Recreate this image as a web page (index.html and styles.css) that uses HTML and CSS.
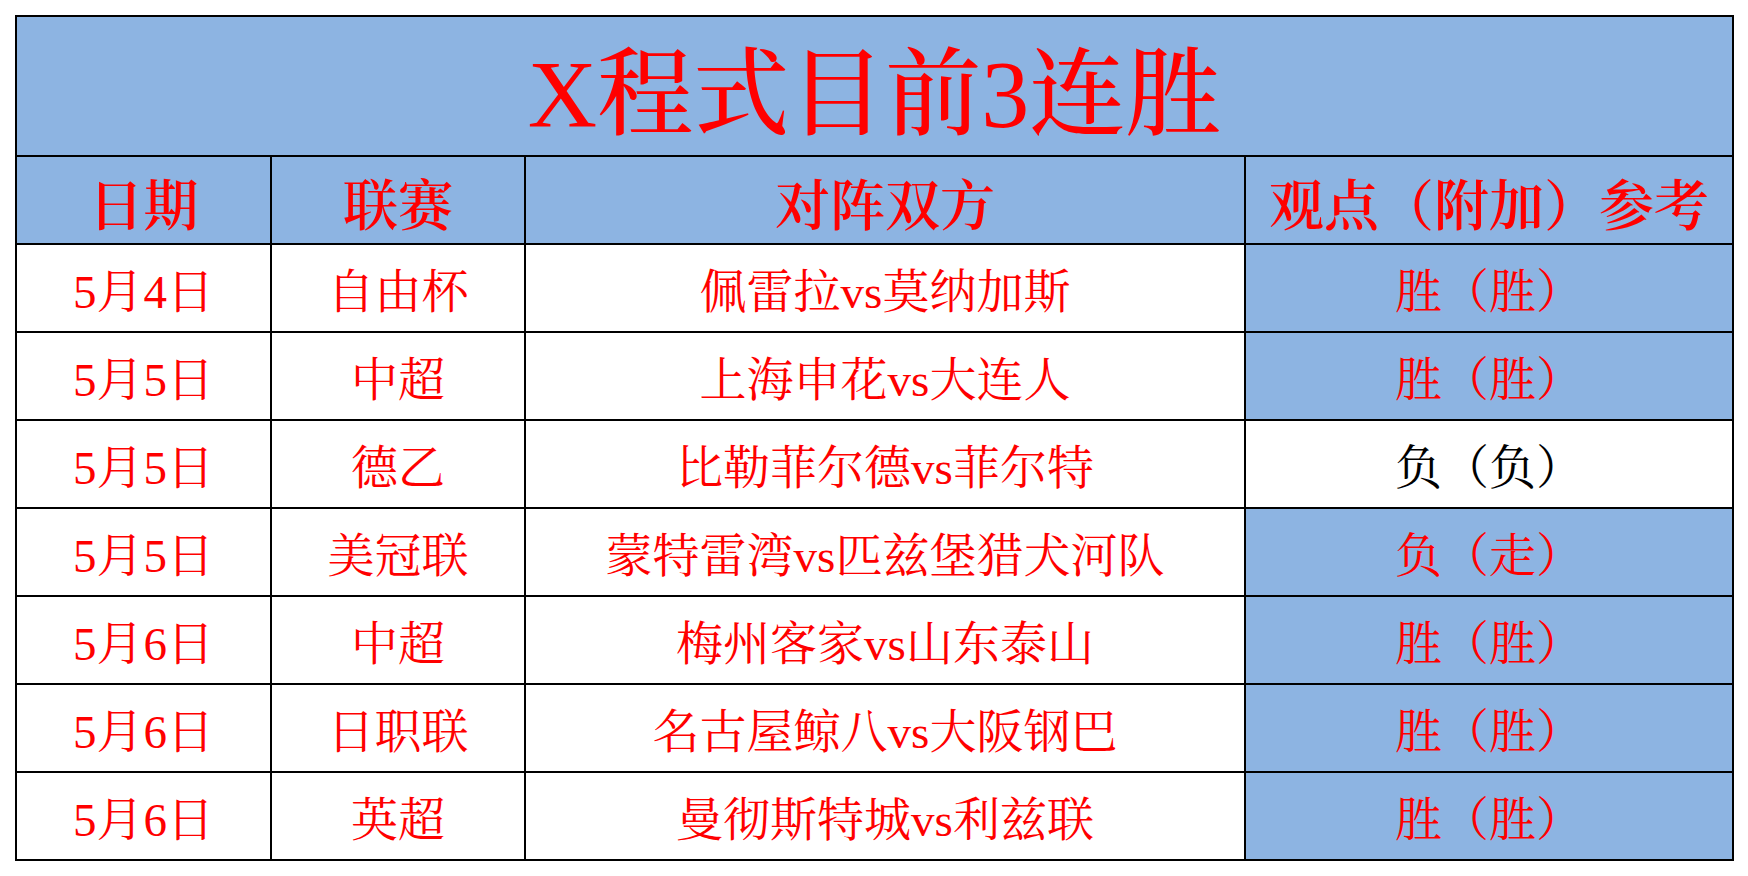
FILE: index.html
```html
<!DOCTYPE html>
<html lang="zh-CN">
<head>
<meta charset="utf-8">
<title>X程式目前3连胜</title>
<link rel="stylesheet" href="styles.css">
</head>
<body>
<table class="sheet">
  <colgroup>
    <col class="c-date">
    <col class="c-league">
    <col class="c-match">
    <col class="c-pick">
  </colgroup>
  <tr class="title-row">
    <td colspan="4" class="title">X程式目前3连胜</td>
  </tr>
  <tr class="head-row">
    <td>日期</td>
    <td>联赛</td>
    <td>对阵双方</td>
    <td>观点（附加）参考</td>
  </tr>
  <tr class="row">
    <td>5月4日</td><td>自由杯</td><td>佩雷拉vs莫纳加斯</td><td class="pick">胜（胜）</td>
  </tr>
  <tr class="row">
    <td>5月5日</td><td>中超</td><td>上海申花vs大连人</td><td class="pick">胜（胜）</td>
  </tr>
  <tr class="row">
    <td>5月5日</td><td>德乙</td><td>比勒菲尔德vs菲尔特</td><td class="pick-lose">负（负）</td>
  </tr>
  <tr class="row">
    <td>5月5日</td><td>美冠联</td><td>蒙特雷湾vs匹兹堡猎犬河队</td><td class="pick">负（走）</td>
  </tr>
  <tr class="row">
    <td>5月6日</td><td>中超</td><td>梅州客家vs山东泰山</td><td class="pick">胜（胜）</td>
  </tr>
  <tr class="row">
    <td>5月6日</td><td>日职联</td><td>名古屋鲸八vs大阪钢巴</td><td class="pick">胜（胜）</td>
  </tr>
  <tr class="row">
    <td>5月6日</td><td>英超</td><td>曼彻斯特城vs利兹联</td><td class="pick">胜（胜）</td>
  </tr>
</table>
</body>
</html>
```

FILE: styles.css
```css
html, body {
  margin: 0;
  padding: 0;
  background: #ffffff;
}

body {
  padding: 15px 0 0 15px;
}

.sheet {
  border-collapse: collapse;
  table-layout: fixed;
  width: 1717px;
  font-family: "Liberation Serif", "Noto Serif CJK SC", "Noto Sans CJK SC", serif;
  color: #ff0000;
}

.c-date { width: 255px; }
.c-league { width: 254px; }
.c-match { width: 720px; }
.c-pick { width: 488px; }

.sheet td {
  border: 2px solid #000000;
  text-align: center;
  vertical-align: middle;
  padding: 8px 0 0 0;
  white-space: nowrap;
  overflow: hidden;
  line-height: 1;
}

.title-row td {
  height: 140px;
  box-sizing: border-box;
  background: #8db4e2;
  font-size: 96px;
  font-weight: 500;
  padding-top: 18px;
}

.head-row td {
  height: 88px;
  box-sizing: border-box;
  background: #8db4e2;
  font-size: 55px;
  font-weight: 600;
  padding-top: 12px;
}

.row td {
  height: 88px;
  box-sizing: border-box;
  font-size: 47px;
  background: #ffffff;
}

.row td.pick {
  background: #8db4e2;
}

.row td.pick-lose {
  background: #ffffff;
  color: #000000;
}
```
